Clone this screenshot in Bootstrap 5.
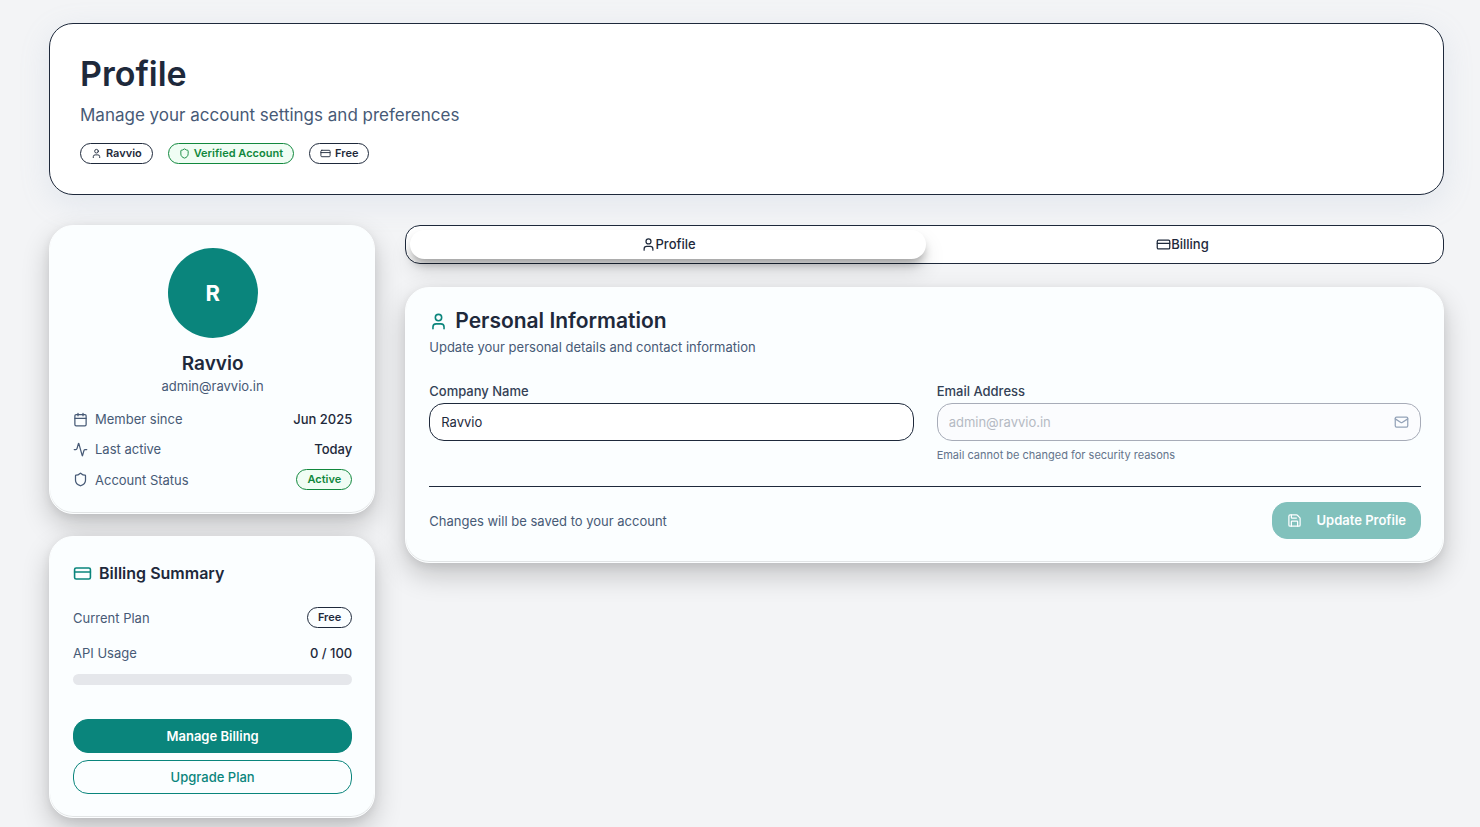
<!DOCTYPE html>
<html lang="en">
<head>
<meta charset="utf-8">
<meta name="viewport" content="width=device-width, initial-scale=1">
<title>Profile</title>
<link href="https://cdn.jsdelivr.net/npm/bootstrap@5.3.0/dist/css/bootstrap.min.css" rel="stylesheet">
<style>
  :root { --ink: #1e293b; --slate: #475a76; --teal: #0a857c; --green: #11883d; }
  body { font-family: Inter, "Liberation Sans", sans-serif; font-size: 13px; line-height: 20px; color: var(--ink); background: #f3f4f6; }
  svg { fill: none; stroke: currentColor; stroke-width: 2; stroke-linecap: round; stroke-linejoin: round; flex: none; }
  .icon-xs { width: 11px; height: 11px; }
  .icon-sm { width: 15px; height: 15px; }
  .icon-md { width: 19px; height: 19px; }
  .page { padding: 23px 36px 9px 49px; }
  .page-header { background: #fff; border: 1px solid var(--ink); border-radius: 24px; padding: 30px; margin-bottom: 30px; box-shadow: 0 8px 30px rgba(148, 170, 200, .18); }
  .page-title { font-size: 34px; line-height: 40px; font-weight: 600; margin-bottom: 8px; }
  .page-subtitle { font-size: 17px; line-height: 26px; color: var(--slate); margin-bottom: 15px; }
  .gap-15 { gap: 15px; }
  .pill { display: inline-flex; align-items: center; gap: 4px; border: 1px solid var(--ink); border-radius: 11px; padding: 2px 10px; font-size: 11px; line-height: 15px; font-weight: 600; }
  .pill-ok { color: var(--green); border-color: var(--green); background: #f0fdf4; }
  .layout { --bs-gutter-x: 30px; --bs-gutter-y: 22px; }
  .fields { --bs-gutter-x: 23px; }
  .stack { display: flex; flex-direction: column; gap: 22px; }
  .stack-main { gap: 23px; }
  .panel { background: #fbfeff; border: 1px solid #fcfeff; border-radius: 24px; padding: 22px 22px 23px 23px; box-shadow: inset 0 -1px 0 rgba(0, 0, 0, .1), 0 12px 28px rgba(0, 0, 0, .2), 0 3px 10px rgba(0, 0, 0, .07); }
  .panel-form { padding-top: 21px; }
  .avatar { width: 90px; height: 90px; background: var(--teal); font-size: 22px; font-weight: 700; margin-bottom: 14px; }
  .person-name { font-size: 19px; line-height: 24px; font-weight: 600; margin: 0; }
  .muted { color: var(--slate); }
  .facts { display: flex; flex-direction: column; gap: 10px; margin: 13px 0 0; }
  .facts dt { font-weight: 400; color: var(--slate); display: flex; align-items: center; gap: 7px; }
  .facts dd { margin: 0; font-weight: 500; }
  .facts .pill { vertical-align: top; }
  .plan-facts { margin-top: 22px; gap: 15px; }
  .side-title { font-size: 16px; line-height: 24px; font-weight: 600; gap: 7px; margin: 2px 0 0; }
  .main-title { font-size: 21px; line-height: 24px; font-weight: 600; gap: 7px; margin: 0; }
  .accent { color: var(--teal); }
  .usage { height: 11px; border-radius: 6px; margin: 11px 0 34px; background: #e5e7eb; }
  .usage .progress-bar { background: var(--teal); }
  .actions { row-gap: 7px; }
  .action { font-size: 13px; line-height: 20px; font-weight: 600; border-radius: 15px; padding: 6px 15px; border: 1px solid var(--teal); }
  .action-solid, .action-solid:disabled { background: var(--teal); border-color: var(--teal); color: #fff; }
  .action-solid:disabled { opacity: .5; }
  .action-line { color: var(--teal); font-weight: 500; }
  .action-save { padding: 8px 14px; gap: 15px; line-height: 19px; }
  .switcher { background: #fff; border: 1px solid var(--ink); border-radius: 15px; padding: 4px; }
  .switcher .nav-link { display: flex; align-items: center; justify-content: center; padding: 4px; line-height: 21px; color: var(--ink); font-weight: 500; border-radius: 15px; }
  .switcher .nav-link.active { background: #fff; color: var(--ink); box-shadow: 0 7px 10px -2px rgba(0, 0, 0, .3), 0 12px 22px rgba(0, 0, 0, .12); }
  .field-label { font-weight: 500; color: #334155; margin-bottom: 2px; }
  .field { font-size: 13px; line-height: 20px; height: 38px; color: var(--ink); border: 1px solid var(--ink); border-radius: 15px; padding: 8px 11px; }
  .field:disabled { background: #fbfcfe; border-color: #a7acb8; color: #b5bac3; }
  .field-icon { right: 12px; color: #94a3b8; }
  .hint { font-size: 11px; line-height: 16px; color: #64748b; margin-top: 6px; }
  .form-foot { border-top: 1px solid var(--ink); margin-top: 23px; padding-top: 15px; }
</style>
</head>
<body>
<svg class="d-none" aria-hidden="true">
  <symbol id="user" viewBox="0 0 24 24"><path d="M19 21v-2a4 4 0 0 0-4-4H9a4 4 0 0 0-4 4v2"/><circle cx="12" cy="7" r="4"/></symbol>
  <symbol id="shield" viewBox="0 0 24 24"><path d="M20 13c0 5-3.500 7.500-7.660 8.950a1 1 0 0 1-.67-.01C7.500 20.500 4 18 4 13V6a1 1 0 0 1 1-1c2 0 4.500-1.200 6.240-2.720a1.170 1.170 0 0 1 1.520 0C14.510 3.810 17 5 19 5a1 1 0 0 1 1 1z"/></symbol>
  <symbol id="card-icon" viewBox="0 0 24 24"><rect width="20" height="14" x="2" y="5" rx="2"/><path d="M2 10h20"/></symbol>
  <symbol id="calendar" viewBox="0 0 24 24"><path d="M8 2v4M16 2v4M3 10h18"/><rect width="18" height="18" x="3" y="4" rx="2"/></symbol>
  <symbol id="activity" viewBox="0 0 24 24"><path d="M22 12h-2.480a2 2 0 0 0-1.930 1.460l-2.350 8.360a.25.25 0 0 1-.48 0L9.240 2.180a.25.25 0 0 0-.48 0l-2.350 8.360A2 2 0 0 1 4.490 12H2"/></symbol>
  <symbol id="mail" viewBox="0 0 24 24"><rect width="20" height="16" x="2" y="4" rx="2"/><path d="m22 7-8.970 5.700a1.940 1.940 0 0 1-2.060 0L2 7"/></symbol>
  <symbol id="save" viewBox="0 0 24 24"><path d="M15.200 3a2 2 0 0 1 1.400.6l3.800 3.800a2 2 0 0 1 .6 1.400V19a2 2 0 0 1-2 2H5a2 2 0 0 1-2-2V5a2 2 0 0 1 2-2z"/><path d="M17 21v-7a1 1 0 0 0-1-1H8a1 1 0 0 0-1 1v7M7 3v4a1 1 0 0 0 1 1h7"/></symbol>
</svg>

<main class="page">
  <header class="page-header">
    <h1 class="page-title">Profile</h1>
    <p class="page-subtitle">Manage your account settings and preferences</p>
    <div class="d-flex flex-wrap gap-15">
      <span class="pill"><svg class="icon-xs"><use href="#user"/></svg>Ravvio</span>
      <span class="pill pill-ok"><svg class="icon-xs"><use href="#shield"/></svg>Verified Account</span>
      <span class="pill"><svg class="icon-xs"><use href="#card-icon"/></svg>Free</span>
    </div>
  </header>

  <div class="row layout">
    <aside class="col-12 col-md-4 col-lg-3 stack">
      <section class="panel">
        <div class="text-center">
          <div class="avatar rounded-circle text-white d-flex align-items-center justify-content-center mx-auto">R</div>
          <h2 class="person-name">Ravvio</h2>
          <p class="muted mb-0">admin@ravvio.in</p>
        </div>
        <dl class="facts">
          <div class="d-flex justify-content-between align-items-center"><dt><svg class="icon-sm"><use href="#calendar"/></svg>Member since</dt><dd>Jun 2025</dd></div>
          <div class="d-flex justify-content-between align-items-center"><dt><svg class="icon-sm"><use href="#activity"/></svg>Last active</dt><dd>Today</dd></div>
          <div class="d-flex justify-content-between align-items-center"><dt><svg class="icon-sm"><use href="#shield"/></svg>Account Status</dt><dd><span class="pill pill-ok">Active</span></dd></div>
        </dl>
      </section>

      <section class="panel">
        <h2 class="side-title d-flex align-items-center"><svg class="icon-md accent"><use href="#card-icon"/></svg>Billing Summary</h2>
        <dl class="facts plan-facts">
          <div class="d-flex justify-content-between align-items-center"><dt>Current Plan</dt><dd><span class="pill">Free</span></dd></div>
          <div class="d-flex justify-content-between align-items-center"><dt>API Usage</dt><dd>0 / 100</dd></div>
        </dl>
        <div class="progress usage" role="progressbar" aria-label="API usage" aria-valuenow="0" aria-valuemin="0" aria-valuemax="100"><div class="progress-bar" style="width: 0%"></div></div>
        <div class="d-grid actions">
          <button type="button" class="btn action action-solid">Manage Billing</button>
          <button type="button" class="btn action action-line">Upgrade Plan</button>
        </div>
      </section>
    </aside>

    <div class="col-12 col-md-8 col-lg-9 stack stack-main">
      <div class="nav nav-pills nav-fill switcher" role="tablist">
        <button type="button" class="nav-link nav-item active" role="tab" aria-selected="true"><svg class="icon-sm"><use href="#user"/></svg>Profile</button>
        <button type="button" class="nav-link nav-item" role="tab" aria-selected="false"><svg class="icon-sm"><use href="#card-icon"/></svg>Billing</button>
      </div>

      <section class="panel panel-form">
        <h2 class="main-title d-flex align-items-center"><svg class="icon-md accent"><use href="#user"/></svg>Personal Information</h2>
        <p class="muted mt-1 mb-4">Update your personal details and contact information</p>
        <form>
          <div class="row fields">
            <div class="col-12 col-lg-6">
              <label class="field-label" for="company">Company Name</label>
              <input class="form-control field" id="company" type="text" value="Ravvio">
            </div>
            <div class="col-12 col-lg-6">
              <label class="field-label" for="email">Email Address</label>
              <div class="position-relative">
                <input class="form-control field" id="email" type="email" value="admin@ravvio.in" aria-describedby="email-hint" disabled>
                <svg class="icon-sm field-icon position-absolute top-50 translate-middle-y"><use href="#mail"/></svg>
              </div>
              <p class="hint mb-0" id="email-hint">Email cannot be changed for security reasons</p>
            </div>
          </div>
          <div class="form-foot d-flex justify-content-between align-items-center">
            <span class="muted">Changes will be saved to your account</span>
            <button type="submit" class="btn action action-solid action-save d-flex align-items-center" disabled><svg class="icon-sm"><use href="#save"/></svg>Update Profile</button>
          </div>
        </form>
      </section>
    </div>
  </div>
</main>
<script src="https://cdn.jsdelivr.net/npm/bootstrap@5.3.0/dist/js/bootstrap.bundle.min.js"></script>
</body>
</html>
